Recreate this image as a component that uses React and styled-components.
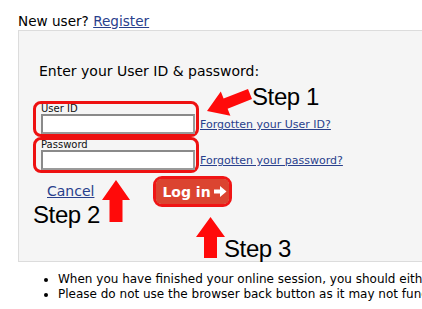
import React from "react";
import styled, { createGlobalStyle } from "styled-components";

const Global = createGlobalStyle`
  html, body { margin: 0; padding: 0; background: #fff; overflow: hidden; }
  body { font-family: Verdana, "DejaVu Sans", sans-serif; color: #000; }
`;

const Page = styled.div`
  width: 700px;
  padding-top: 13px;
`;

const Header = styled.div`
  margin-left: 18px;
  font-size: 13.6px;
  line-height: 16px;
`;

const Link = styled.a`
  color: #29408c;
  text-decoration: underline;
  font-size: ${(p) => p.$size || 13.6}px;
  cursor: pointer;
`;

const Panel = styled.div`
  position: relative;
  margin: 1px 0 0 18px;
  width: 600px;
  background: #f5f5f5;
  border: 1px solid #dcdcdc;
  padding: 32px 0 54px 14px;
`;

const Title = styled.div`
  padding-left: 6px;
  font-size: 14px;
  line-height: 17px;
  margin-bottom: 21px;
`;

const FieldRow = styled.div`
  display: flex;
  align-items: flex-end;
`;

const Highlight = styled.div`
  box-sizing: border-box;
  width: 166px;
  border: 3px solid #ee1111;
  border-radius: 8px;
  padding: 0 1px 0 5px;
  display: flex;
  flex-direction: column;
`;

const Label = styled.label`
  font-size: 10px;
  line-height: 10px;
  color: #111;
`;

const Input = styled.input`
  box-sizing: border-box;
  width: 154px;
  height: 20px;
  margin: 0;
  border: 2px solid #9a9a9a;
  border-top-color: #8a8a8a;
  border-left-color: #8a8a8a;
  background: #fff;
  padding: 0 2px;
  outline: none;
`;

const Forgot = styled(Link)`
  margin: 0 0 6px 1px;
  line-height: 13px;
`;

const Actions = styled.div`
  display: flex;
  align-items: center;
  margin-top: 3px;
`;

const Cancel = styled(Link)`
  margin-left: 14px;
  font-size: 14px;
  line-height: 17px;
`;

const ButtonRing = styled.div`
  margin-left: 59px;
  border: 3px solid #f01515;
  border-radius: 9px;
  display: flex;
`;

const LoginButton = styled.button`
  display: flex;
  align-items: center;
  gap: 3px;
  height: 25px;
  width: 73px;
  padding: 0 0 0 6px;
  border: none;
  border-radius: 5px;
  background: #db4430;
  color: #fff;
  font-family: Verdana, "DejaVu Sans", sans-serif;
  font-weight: bold;
  font-size: 14px;
`;

const StepLabel = styled.div`
  position: absolute;
  left: ${(p) => p.$x}px;
  top: ${(p) => p.$y}px;
  font-family: "Liberation Sans", Arial, sans-serif;
  font-size: 24px;
  line-height: 1;
  letter-spacing: -0.4px;
  color: #000;
  white-space: nowrap;
`;

const Arrow = styled.svg`
  position: absolute;
  left: ${(p) => p.$x}px;
  top: ${(p) => p.$y}px;
`;

const Notes = styled.ul`
  margin: 10px 0 0 0;
  padding-left: 58px;
  font-size: 12px;
  line-height: 15px;
  white-space: nowrap;
`;

const UpArrow = ({ x, y, w, h }) => (
  <Arrow $x={x} $y={y} width={w} height={h} viewBox={`0 0 ${w} ${h}`}>
    <polygon
      fill="#ff0a0a"
      points={`${w / 2},0 ${w},20 ${w / 2 + 6.5},20 ${w / 2 + 6.5},${h} ${w / 2 - 6.5},${h} ${w / 2 - 6.5},20 0,20`}
    />
  </Arrow>
);

export default function App() {
  return (
    <Page>
      <Global />
      <Header>
        New user? <Link>Register</Link>
      </Header>
      <Panel>
        <Title>Enter your User ID &amp; password:</Title>
        <FieldRow>
          <Highlight>
            <Label>User ID</Label>
            <Input type="text" />
          </Highlight>
          <Forgot $size={11}>Forgotten your User ID?</Forgot>
        </FieldRow>
        <FieldRow>
          <Highlight>
            <Label>Password</Label>
            <Input type="password" />
          </Highlight>
          <Forgot $size={11}>Forgotten your password?</Forgot>
        </FieldRow>
        <Actions>
          <Cancel>Cancel</Cancel>
          <ButtonRing>
            <LoginButton>
              Log in
              <svg width="13" height="11" viewBox="0 0 13 11">
                <polygon fill="#fff" points="0,3.5 6,3.5 6,0 12.5,5.5 6,11 6,7.5 0,7.5" />
              </svg>
            </LoginButton>
          </ButtonRing>
        </Actions>

        <Arrow $x={186} $y={55} width="50" height="32" viewBox="0 0 50 32">
          <polygon
            fill="#ff0a0a"
            points="2,25 25.4,29.7 22.6,22.7 47,13.1 43,2.9 18.6,12.5 15.8,5.5"
          />
        </Arrow>
        <StepLabel $x={233} $y={54}>Step 1</StepLabel>

        <UpArrow x={83} y={149} w={28} h={42} />
        <StepLabel $x={14} $y={172}>Step 2</StepLabel>

        <UpArrow x={177} y={186} w={29} h={41} />
        <StepLabel $x={205} $y={206}>Step 3</StepLabel>
      </Panel>
      <Notes>
        <li>When you have finished your online session, you should either log out or close your browser.</li>
        <li>Please do not use the browser back button as it may not function correctly.</li>
      </Notes>
    </Page>
  );
}
